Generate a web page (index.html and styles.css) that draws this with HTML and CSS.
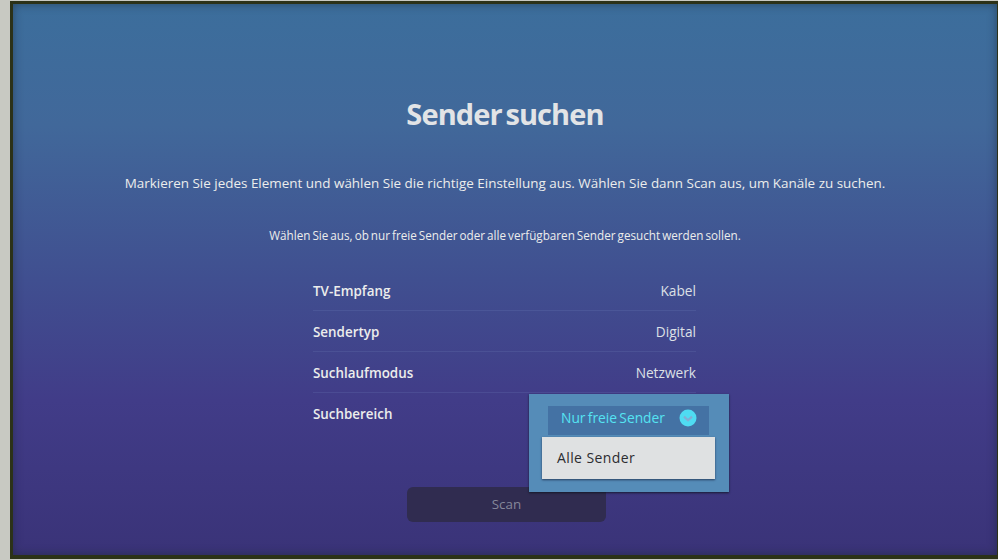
FILE: index.html
```html
<!DOCTYPE html>
<html lang="de">
<head>
    <meta charset="UTF-8">
    <title>Sender suchen</title>
    <link rel="stylesheet" href="styles.css">
</head>
<body>
    <div class="bezel">
        <div class="screen">
            <h1 class="title">Sender suchen</h1>
            <p class="intro">Markieren Sie jedes Element und wählen Sie die richtige Einstellung aus. Wählen Sie dann Scan aus, um Kanäle zu suchen.</p>
            <p class="hint">Wählen Sie aus, ob nur freie Sender oder alle verfügbaren Sender gesucht werden sollen.</p>

            <div class="settings">
                <div class="row">
                    <span class="label">TV-Empfang</span>
                    <span class="value">Kabel</span>
                </div>
                <div class="row">
                    <span class="label">Sendertyp</span>
                    <span class="value">Digital</span>
                </div>
                <div class="row">
                    <span class="label">Suchlaufmodus</span>
                    <span class="value">Netzwerk</span>
                </div>
                <div class="row last">
                    <span class="label">Suchbereich</span>
                </div>

                <div class="dropdown">
                    <div class="option-selected">
                        <span>Nur freie Sender</span>
                        <svg class="check" viewBox="0 0 18 18" width="18" height="18">
                            <circle cx="9" cy="9" r="8.5" fill="#4fdcf2"/>
                            <path d="M5 7.6 L9 11.2 L13 7.6" fill="none" stroke="#82aed4" stroke-width="2.2"/>
                        </svg>
                    </div>
                    <div class="option">Alle Sender</div>
                </div>
            </div>

            <div class="scan">Scan</div>
        </div>
    </div>
</body>
</html>
```

FILE: styles.css
```css
* {
    margin: 0;
    padding: 0;
    box-sizing: border-box;
}

body {
    width: 998px;
    height: 560px;
    overflow: hidden;
    background: #c8c9c2;
    font-family: "Open Sans", "Noto Sans", sans-serif;
    color: #ecedec;
}

.bezel {
    height: 560px;
    padding: 1px 0 0 10px;
}

.screen {
    width: 988px;
    height: 558px;
    border: solid #2c3218;
    border-width: 3px 1px 4px 3px;
    background: linear-gradient(180deg, #3c6e9c 0%, #41689a 22%, #404f90 50%, #413c88 72%, #3a3378 100%);
    box-shadow: inset 0 0 10px rgba(25, 35, 45, 0.5);
    display: flex;
    flex-direction: column;
    align-items: center;
    text-align: center;
}

.title {
    margin-top: 90px;
    font-size: 29px;
    line-height: 40px;
    font-weight: 700;
    letter-spacing: -0.9px;
    word-spacing: -3px;
    color: #e2e4e6;
}

.intro {
    margin-top: 39px;
    font-size: 13.45px;
    line-height: 20px;
}

.hint {
    margin-top: 32px;
    font-size: 11.7px;
    line-height: 20px;
    word-spacing: -1px;
}

.settings {
    position: relative;
    width: 384px;
    margin-top: 25px;
    padding-right: 1px;
}

.row {
    height: 41px;
    padding-top: 2px;
    display: flex;
    justify-content: space-between;
    align-items: center;
    border-bottom: 1px solid rgba(130, 150, 205, 0.16);
    font-size: 13.4px;
}

.row.last {
    padding-top: 0;
    border-bottom: none;
}

.label {
    font-weight: 600;
}

.value {
    margin-top: -2px;
    font-size: 13.7px;
    color: #dde0e6;
}

.dropdown {
    position: absolute;
    top: 124px;
    left: 216px;
    width: 200px;
    height: 98px;
    padding-top: 12px;
    background: #558cb8;
    box-shadow: 0 1px 2px rgba(15, 20, 30, 0.8);
}

.option-selected {
    width: 161px;
    height: 29px;
    margin: 0 0 2px 19px;
    padding: 0 12px 6px 13px;
    background: #4472a4;
    display: flex;
    justify-content: space-between;
    align-items: center;
    font-size: 13.8px;
    word-spacing: -1.3px;
    color: #55e4f2;
}

.check {
    flex: none;
}

.option {
    width: 173px;
    height: 42px;
    margin-left: 13px;
    padding-left: 15px;
    background: #dfe1e2;
    box-shadow: 0 1px 2px rgba(20, 30, 60, 0.7);
    color: #2c2c30;
    font-size: 14px;
    line-height: 42px;
    text-align: left;
    letter-spacing: 0.4px;
}

.scan {
    width: 199px;
    height: 35px;
    margin: 53px 0 0 3px;
    border-radius: 6px;
    background: #302c50;
    color: #85879a;
    font-size: 13.4px;
    line-height: 35px;
}
```
